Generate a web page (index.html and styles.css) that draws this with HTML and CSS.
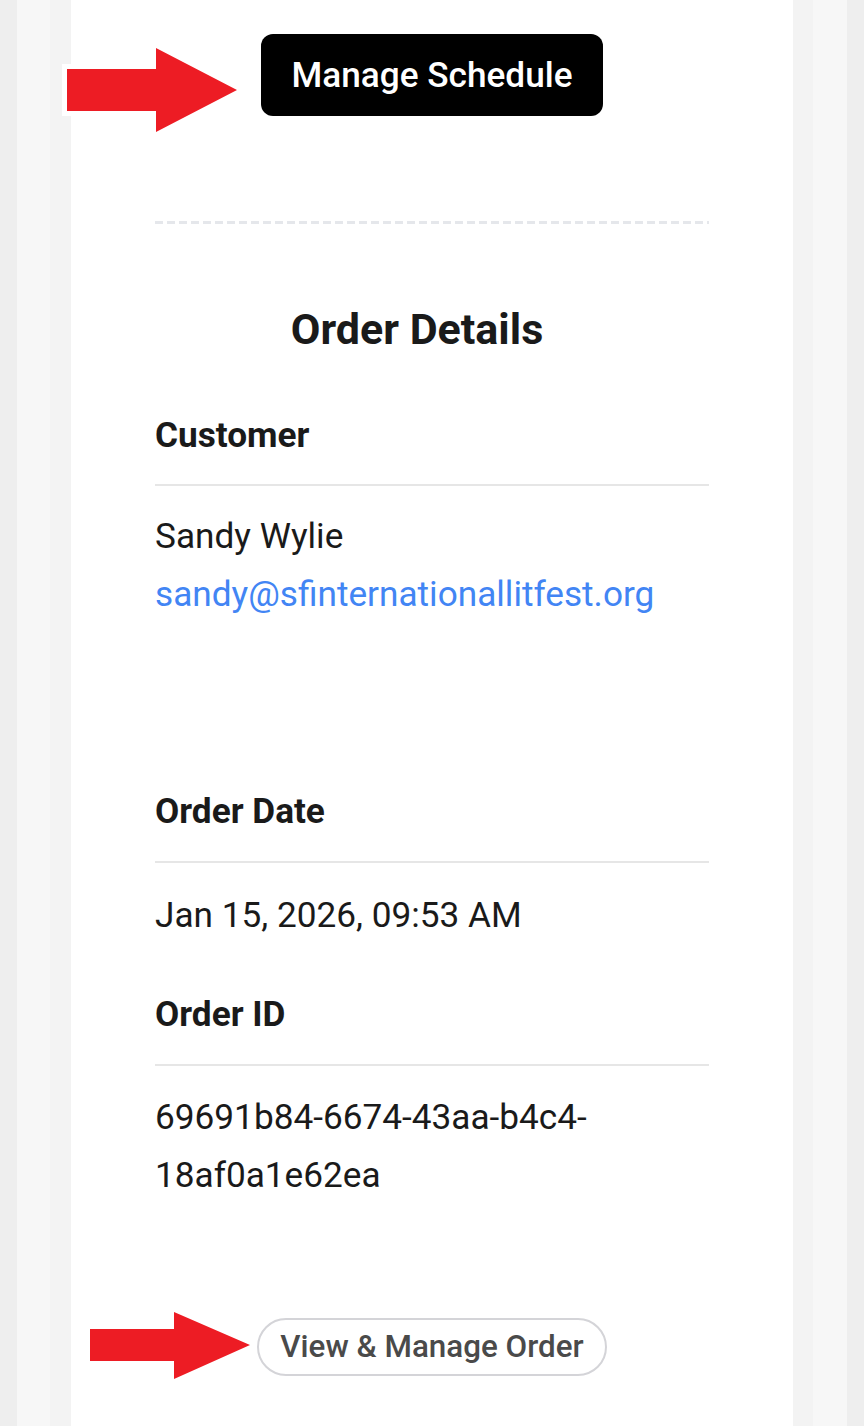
FILE: index.html
```html
<!DOCTYPE html>
<html lang="en">
<head>
    <meta charset="UTF-8">
    <meta name="viewport" content="width=device-width, initial-scale=1.0">
    <title>Order Details</title>
    <link rel="stylesheet" href="styles.css">
</head>
<body>
    <div class="outer">
        <div class="wrap">
            <div class="inner">
                <div class="card">

                    <div class="btn-row btn-row-top">
                        <svg class="arrow arrow-top" width="182" height="96" viewBox="0 0 182 96">
                            <path d="M5 26 H94 V5 L175 47 L94 89 V68 H5 Z" fill="#ffffff" stroke="#ffffff" stroke-width="10" stroke-linejoin="miter"/>
                            <path d="M5 26 H94 V5 L175 47 L94 89 V68 H5 Z" fill="#ed1c24"/>
                        </svg>
                        <a class="btn-dark" href="#">Manage Schedule</a>
                    </div>

                    <div class="dashed"></div>

                    <h2 class="title">Order Details</h2>

                    <div class="section section-customer">
                        <div class="label">Customer</div>
                        <div class="value">
                            <div>Sandy Wylie</div>
                            <div class="mail-line"><a class="mail" href="#">sandy@sfinternationallitfest.org</a></div>
                        </div>
                    </div>

                    <div class="section section-date">
                        <div class="label">Order Date</div>
                        <div class="value">Jan 15, 2026, 09:53 AM</div>
                    </div>

                    <div class="section section-id">
                        <div class="label">Order ID</div>
                        <div class="value value-id">69691b84-6674-43aa-b4c4-<br>18af0a1e62ea</div>
                    </div>

                    <div class="btn-row btn-row-bottom">
                        <svg class="arrow arrow-bottom" width="162" height="67" viewBox="0 0 162 67">
                            <path d="M0 17 H84 V0 L160 33 L84 67 V49 H0 Z" fill="#ed1c24"/>
                        </svg>
                        <a class="btn-light" href="#">View &amp; Manage Order</a>
                    </div>

                </div>
            </div>
        </div>
    </div>
</body>
</html>
```

FILE: styles.css
```css
body {
    margin: 0;
    background-color: #eeeeee;
    font-family: 'Roboto', 'Liberation Sans', sans-serif;
    color: #1a1a1a;
}
.outer {
    padding: 0 17px;
}
.wrap {
    background-color: #f7f7f7;
    padding: 0 34px 0 33px;
}
.inner {
    background-color: #f3f3f3;
    padding: 0 20px 0 21px;
}
.card {
    display: flow-root;
    background-color: #ffffff;
    padding: 0 84px;
    min-height: 1426px;
}
.btn-row {
    position: relative;
    text-align: center;
}
.btn-row-top {
    margin-top: 34px;
}
.btn-dark {
    display: inline-block;
    background-color: #000000;
    color: #ffffff;
    font-weight: 500;
    font-size: 35.2px;
    line-height: 82px;
    padding: 0 30px;
    border-radius: 12px;
    text-decoration: none;
}
.arrow {
    position: absolute;
}
.arrow-top {
    left: -93px;
    top: 9px;
}
.dashed {
    margin-top: 105px;
    height: 3px;
    background: repeating-linear-gradient(90deg, #e5e7eb 0, #e5e7eb 8px, transparent 8px, transparent 12px);
}
.title {
    margin: 79px 0 0;
    padding-right: 30px;
    text-align: center;
    font-size: 43px;
    line-height: 52px;
    font-weight: 700;
}
.label {
    font-weight: 700;
    font-size: 35.2px;
    line-height: 52px;
    padding-bottom: 23px;
    border-bottom: 2px solid #e6e6e6;
}
.value {
    font-size: 35.2px;
    line-height: 52px;
    margin-top: 24px;
}
.mail-line {
    margin-top: 6px;
}
.mail {
    color: #4285f4;
    text-decoration: none;
}
.section-customer {
    margin-top: 54px;
}
.section-date {
    margin-top: 165px;
}
.section-date .label,
.section-id .label {
    padding-bottom: 24px;
}
.section-date .value {
    margin-top: 26px;
}
.section-id {
    margin-top: 47px;
}
.value-id {
    line-height: 58px;
    margin-top: 22px;
}
.btn-row-bottom {
    margin-top: 114px;
}
.btn-light {
    display: inline-block;
    color: #4a4a4a;
    font-weight: 500;
    font-size: 31.4px;
    line-height: 54px;
    padding: 0 21px;
    border: 2px solid #d4d4d8;
    border-radius: 30px;
    text-decoration: none;
}
.arrow-bottom {
    left: -65px;
    top: -6px;
}
```
